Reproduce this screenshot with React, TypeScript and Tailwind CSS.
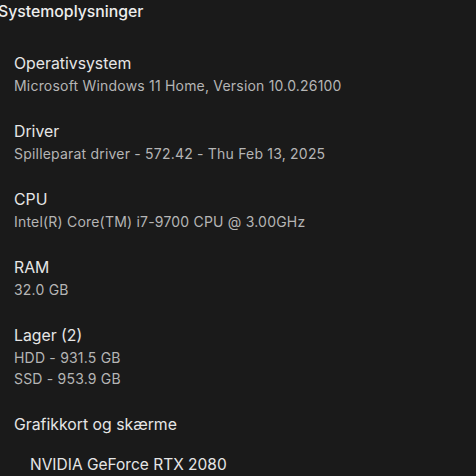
const sections = [
  { label: 'Operativsystem', values: ['Microsoft Windows 11 Home, Version 10.0.26100'] },
  { label: 'Driver', values: ['Spilleparat driver - 572.42 - Thu Feb 13, 2025'] },
  { label: 'CPU', values: ['Intel(R) Core(TM) i7-9700 CPU @ 3.00GHz'] },
  { label: 'RAM', values: ['32.0 GB'] },
  { label: 'Lager (2)', values: ['HDD - 931.5 GB', 'SSD - 953.9 GB'] },
]

export default function App() {
  return (
    <div className="w-[476px] h-[476px] overflow-hidden bg-[#1a1a1a] font-['Inter',sans-serif]">
      <h1 className="ml-[-2px] h-6 leading-6 text-[15.8px] font-medium text-[#ededed]">Systemoplysninger</h1>
      <div className="mt-[29px] pl-[14px] flex flex-col gap-[25px]">
        {sections.map(s => (
          <div key={s.label}>
            <div className="h-[22px] leading-[22px] text-[15.8px] text-[#e6e6e6]">{s.label}</div>
            {s.values.map(v => (
              <div key={v} className="h-[21px] leading-[21px] text-[14px] tracking-[0.2px] text-[#b5b5b5]">{v}</div>
            ))}
          </div>
        ))}
        <div>
          <div className="h-[22px] leading-[22px] text-[15.8px] text-[#e6e6e6]">Grafikkort og skærme</div>
          <div className="mt-[17px] pl-4 h-6 leading-6 text-[15.5px] text-[#e6e6e6]">NVIDIA GeForce RTX 2080</div>
        </div>
      </div>
    </div>
  )
}
